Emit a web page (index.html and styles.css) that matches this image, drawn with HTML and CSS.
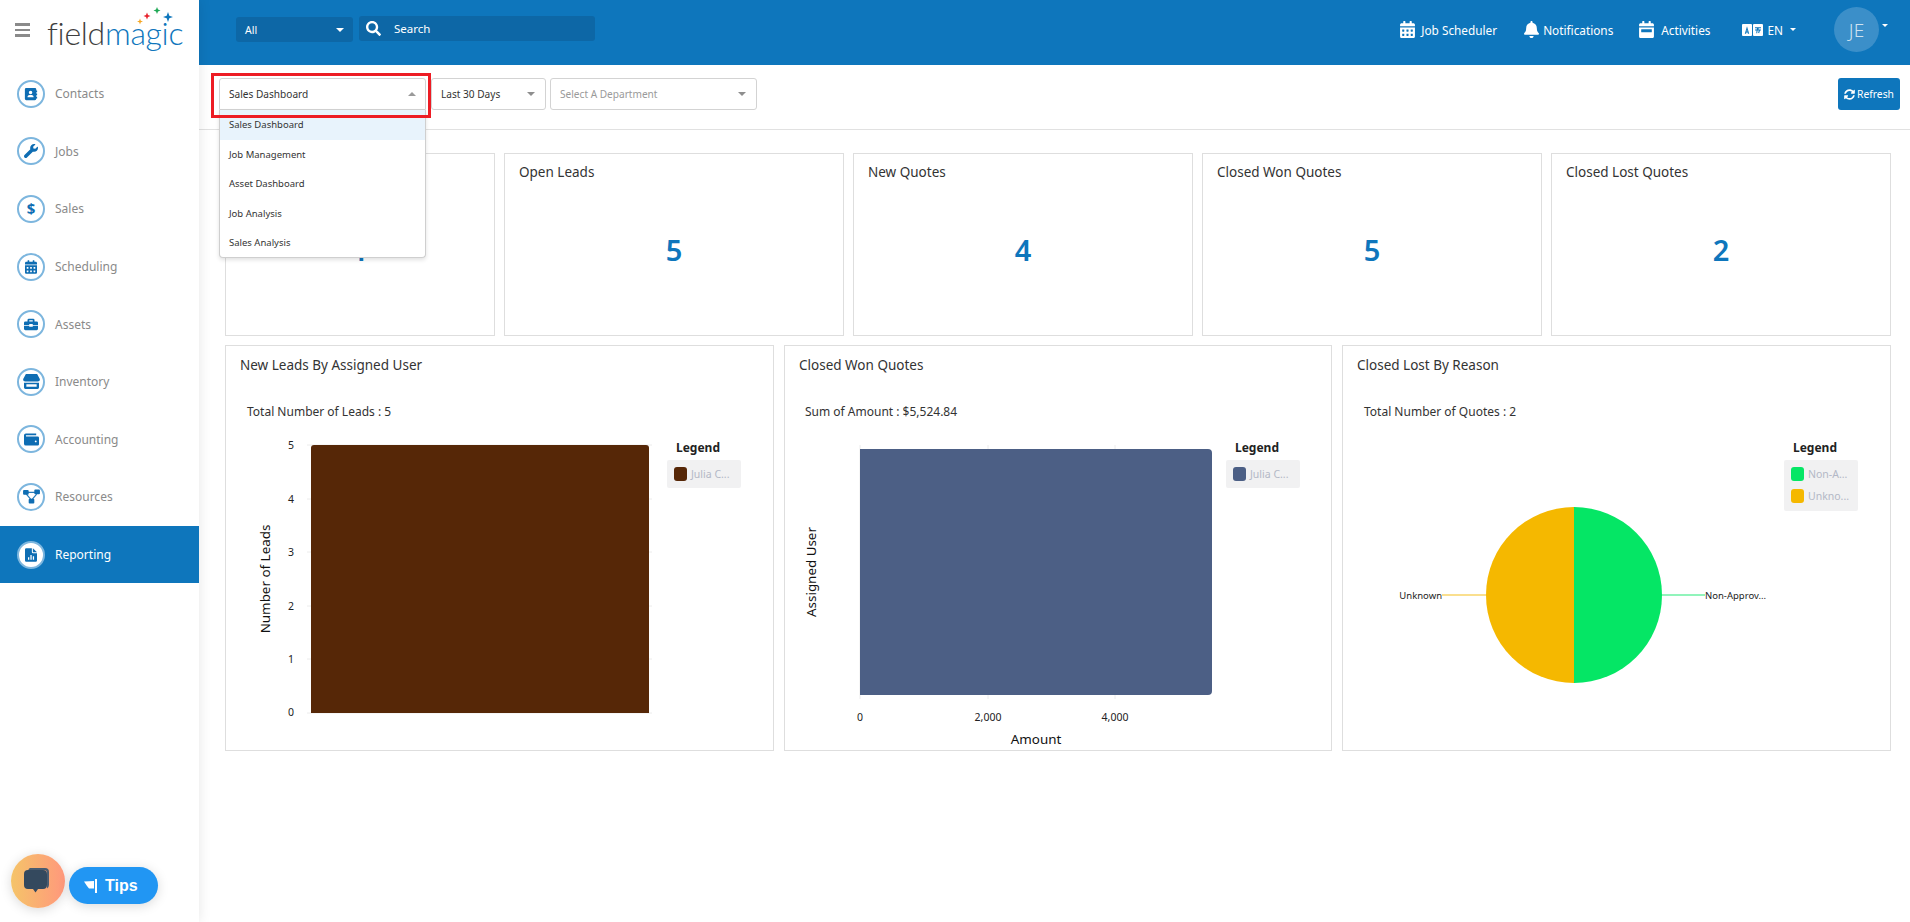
FILE: index.html
```html
<!DOCTYPE html>
<html lang="en">
<head>
<meta charset="utf-8">
<title>fieldmagic - Sales Dashboard</title>
<link rel="stylesheet" href="styles.css">
</head>
<body>
<svg class="defs" width="0" height="0" aria-hidden="true">
  <symbol id="i-cal" viewBox="0 0 448 512"><path d="M0 464c0 26.500 21.500 48 48 48h352c26.500 0 48-21.500 48-48V192H0v272zm320-196c0-6.600 5.400-12 12-12h40c6.600 0 12 5.400 12 12v40c0 6.600-5.400 12-12 12h-40c-6.600 0-12-5.400-12-12v-40zm0 128c0-6.600 5.400-12 12-12h40c6.600 0 12 5.400 12 12v40c0 6.600-5.400 12-12 12h-40c-6.600 0-12-5.400-12-12v-40zM192 268c0-6.600 5.400-12 12-12h40c6.600 0 12 5.400 12 12v40c0 6.600-5.400 12-12 12h-40c-6.600 0-12-5.400-12-12v-40zm0 128c0-6.600 5.400-12 12-12h40c6.600 0 12 5.400 12 12v40c0 6.600-5.400 12-12 12h-40c-6.600 0-12-5.400-12-12v-40zM64 268c0-6.600 5.400-12 12-12h40c6.600 0 12 5.400 12 12v40c0 6.600-5.400 12-12 12H76c-6.600 0-12-5.400-12-12v-40zm0 128c0-6.600 5.400-12 12-12h40c6.600 0 12 5.400 12 12v40c0 6.600-5.400 12-12 12H76c-6.600 0-12-5.400-12-12v-40zM400 64h-48V16c0-8.800-7.200-16-16-16h-32c-8.800 0-16 7.200-16 16v48H160V16c0-8.800-7.200-16-16-16h-32c-8.800 0-16 7.200-16 16v48H48C21.500 64 0 85.500 0 112v48h448v-48c0-26.500-21.500-48-48-48z"/></symbol>
  <symbol id="i-bell" viewBox="0 0 448 512"><path d="M224 512c35.320 0 63.970-28.650 63.970-64H160.030c0 35.350 28.650 64 63.970 64zm215.390-149.710c-19.320-20.760-55.470-51.990-55.470-154.290 0-77.700-54.480-139.900-127.940-155.160V32c0-17.670-14.320-32-31.980-32s-31.980 14.330-31.980 32v20.840C118.560 68.100 64.080 130.300 64.080 208c0 102.300-36.150 133.530-55.470 154.290-6 6.450-8.660 14.160-8.610 21.710.11 16.400 12.980 32 32.100 32h383.800c19.120 0 32-15.600 32.100-32 .05-7.550-2.610-15.270-8.610-21.710z"/></symbol>
  <symbol id="i-act" viewBox="0 0 448 512"><path d="M400 64h-48V16c0-8.800-7.200-16-16-16h-32c-8.800 0-16 7.200-16 16v48H160V16c0-8.800-7.200-16-16-16h-32c-8.800 0-16 7.200-16 16v48H48C21.500 64 0 85.500 0 112v48h448v-48c0-26.500-21.500-48-48-48zM0 464c0 26.500 21.500 48 48 48h352c26.500 0 48-21.500 48-48V192H0v272zm64-200c0-6.600 5.400-12 12-12h296c6.600 0 12 5.400 12 12v64c0 6.600-5.400 12-12 12H76c-6.600 0-12-5.400-12-12v-64z"/></symbol>
  <symbol id="i-search" viewBox="0 0 512 512"><path d="M505 442.700L405.300 343c-4.500-4.500-10.600-7-17-7H372c27.600-35.300 44-79.700 44-128C416 93.100 322.900 0 208 0S0 93.100 0 208s93.100 208 208 208c48.300 0 92.700-16.400 128-44v16.300c0 6.400 2.500 12.500 7 17l99.700 99.700c9.400 9.400 24.600 9.400 33.900 0l28.300-28.300c9.400-9.400 9.400-24.600.1-34zM208 336c-70.700 0-128-57.200-128-128 0-70.700 57.200-128 128-128 70.700 0 128 57.200 128 128 0 70.700-57.200 128-128 128z"/></symbol>
  <symbol id="i-sync" viewBox="0 0 512 512"><path d="M370.720 133.280C339.458 104.008 298.888 87.962 255.848 88c-77.458.068-144.328 53.178-162.791 126.850-1.344 5.363-6.122 9.150-11.651 9.150H24.103c-7.498 0-13.194-6.807-11.807-14.176C33.933 94.924 134.813 8 256 8c66.448 0 126.791 26.136 171.315 68.685L463.030 40.970C478.149 25.851 504 36.559 504 57.941V192c0 13.255-10.745 24-24 24H345.941c-21.382 0-32.090-25.851-16.971-40.971l41.750-41.749zM32 296h134.059c21.382 0 32.090 25.851 16.971 40.971l-41.750 41.750c31.262 29.273 71.835 45.319 114.876 45.280 77.418-.07 144.315-53.144 162.787-126.849 1.344-5.363 6.122-9.150 11.651-9.150h57.304c7.498 0 13.194 6.807 11.807 14.176C478.067 417.076 377.187 504 256 504c-66.448 0-126.791-26.136-171.315-68.685L48.970 471.030C33.851 486.149 8 475.441 8 454.059V320c0-13.255 10.745-24 24-24z"/></symbol>
  <symbol id="i-contacts" viewBox="0 0 16 16"><path fill-rule="evenodd" d="M2.500 1h10A1.500 1.500 0 0 1 14 2.500V4h1v2h-1v1.500h1v2h-1V11h1v2h-1v.5a1.500 1.500 0 0 1-1.500 1.500h-10A1.500 1.500 0 0 1 1 13.500v-11A1.500 1.500 0 0 1 2.500 1zM7.500 4.300a2 2 0 1 0 0 4 2 2 0 0 0 0-4zM4 11.800h7c0-1.700-1.100-2.700-2.300-2.700H6.300C5.100 9.100 4 10.100 4 11.800z"/></symbol>
  <symbol id="i-wrench" viewBox="0 0 512 512"><path d="M507.730 109.100c-2.240-9.030-13.540-12.090-20.120-5.510l-74.360 74.360-67.880-11.310-11.310-67.880 74.360-74.360c6.620-6.620 3.430-17.900-5.660-20.160-47.380-11.740-99.550.91-136.580 37.930-39.640 39.640-50.550 97.100-34.050 147.200L18.740 402.760c-24.990 24.990-24.990 65.510 0 90.500 24.990 24.990 65.510 24.990 90.500 0l213.210-213.210c50.120 16.710 107.470 5.680 147.370-34.220 37.070-37.070 49.700-89.320 37.910-136.730z"/></symbol>
  <symbol id="i-case" viewBox="0 0 16 16"><path d="M5.500 2h5A1.500 1.500 0 0 1 12 3.500V5h2.500A1.500 1.500 0 0 1 16 6.500V9H10V8H6v1H0V6.500A1.500 1.500 0 0 1 1.500 5H4V3.500A1.500 1.500 0 0 1 5.500 2zM6 3.700V5h4V3.700H6zM0 10h6v1h4v-1h6v3.500a1.500 1.500 0 0 1-1.500 1.500h-13A1.500 1.500 0 0 1 0 13.500V10z"/></symbol>
  <symbol id="i-store" viewBox="0 0 18 16"><path d="M3 0h12l3 5.500A2.500 2.500 0 0 1 15.700 8H2.300A2.500 2.500 0 0 1 0 5.500L3 0zM1 9.200h16V14.500a1.500 1.500 0 0 1-1.500 1.500h-13A1.500 1.500 0 0 1 1 14.500V9.200zM3.500 11v2.500h11V11h-11z" fill-rule="evenodd"/></symbol>
  <symbol id="i-wallet" viewBox="0 0 16 16"><path fill-rule="evenodd" d="M2 1.500h11V3.500H2.300a.8.800 0 0 0 0 1.200H14.500A1.500 1.500 0 0 1 16 6.200V13a1.500 1.500 0 0 1-1.500 1.500H2A2 2 0 0 1 0 12.500V3.500a2 2 0 0 1 2-2zM12.500 9a1 1 0 1 0 0 2 1 1 0 0 0 0-2z"/></symbol>
  <symbol id="i-nodes" viewBox="0 0 18 16"><rect x="0" y="1" width="6" height="5" rx="1"/><rect x="12" y="0.500" width="6" height="5" rx="1"/><rect x="6" y="10.500" width="6" height="5" rx="1"/><path d="M5 3h8v1.200H5zM4 5l5 6-1 .8-5-6zM14 5l-5 6 1 .8 5-6z" opacity=".9"/></symbol>
  <symbol id="i-file" viewBox="0 0 14 16"><path fill-rule="evenodd" d="M1.500 0H8v4.500A1.500 1.500 0 0 0 9.500 6H14v8.500a1.500 1.500 0 0 1-1.500 1.500h-11A1.500 1.500 0 0 1 0 14.500v-13A1.500 1.500 0 0 1 1.500 0zM3.500 10.500v3h1.500v-3zM6.300 8v5.500h1.500V8zM9.100 9.500v4h1.500v-4z"/><path d="M9.200 0 14 4.800H9.200z"/></symbol>
</svg>

<div class="app">
  <aside class="sidebar">
    <div class="brand">
      <div class="burger"><span></span><span></span><span></span></div>
      <div class="logo">
        <span class="logo-dark">field</span><span class="logo-blue">magic</span>
        <svg class="logo-stars" viewBox="0 0 40 20" width="40" height="20" aria-hidden="true">
          <path fill="#f5a623" d="M3 11.500l.8 2.200 2.200.8-2.200.8L3 17.500l-.8-2.200-2.200-.8 2.200-.8z"/>
          <path fill="#e8232e" d="M10 5.500l1 2.500 2.500 1-2.500 1-1 2.500-1-2.500-2.500-1 2.500-1z"/>
          <path fill="#1fa855" d="M20 0l1 2.500 2.500 1-2.500 1-1 2.500-1-2.500-2.500-1 2.500-1z"/>
          <path fill="#0e76bc" d="M31 5l1.300 3.700L36 10l-3.700 1.300L31 15l-1.300-3.700L26 10l3.700-1.300z"/>
        </svg>
      </div>
    </div>
    <nav class="nav">
      <a class="nav-item"><span class="nav-ico"><svg width="14" height="14"><use href="#i-contacts"/></svg></span>Contacts</a>
      <a class="nav-item"><span class="nav-ico"><svg width="14" height="14"><use href="#i-wrench"/></svg></span>Jobs</a>
      <a class="nav-item"><span class="nav-ico nav-dollar">$</span>Sales</a>
      <a class="nav-item"><span class="nav-ico"><svg width="12" height="14"><use href="#i-cal"/></svg></span>Scheduling</a>
      <a class="nav-item"><span class="nav-ico"><svg width="14" height="14"><use href="#i-case"/></svg></span>Assets</a>
      <a class="nav-item"><span class="nav-ico"><svg width="17" height="15"><use href="#i-store"/></svg></span>Inventory</a>
      <a class="nav-item"><span class="nav-ico"><svg width="15" height="15"><use href="#i-wallet"/></svg></span>Accounting</a>
      <a class="nav-item"><span class="nav-ico"><svg width="17" height="15"><use href="#i-nodes"/></svg></span>Resources</a>
      <a class="nav-item is-active"><span class="nav-ico"><svg width="12" height="14"><use href="#i-file"/></svg></span>Reporting</a>
    </nav>
    <div class="helpers">
      <div class="chat-btn">
        <svg width="30" height="30" viewBox="0 0 30 30" aria-hidden="true">
          <path fill="#4a5c70" d="M7 2h15a4 4 0 0 1 4 4v13a4 4 0 0 1-2 3.400V7a3 3 0 0 0-3-3H5.300A4 4 0 0 1 7 2z"/>
          <path fill="#34495e" d="M5 4h15a4 4 0 0 1 4 4v11a4 4 0 0 1-4 4h-5l-2.500 3.500L10 23H5a4 4 0 0 1-4-4V8a4 4 0 0 1 4-4z"/>
        </svg>
      </div>
      <div class="tips-btn">
        <svg width="13" height="14" viewBox="0 0 13 14" aria-hidden="true"><path fill="#fff" d="M11 0h2v14h-2zM0 2.500l10-.5v7.500H5L3 7 0 2.500z"/></svg>
        <span>Tips</span>
      </div>
    </div>
  </aside>

  <div class="main">
    <header class="topbar">
      <div class="search-group">
        <div class="scope"><span>All</span><i class="caret caret-white"></i></div>
        <div class="search">
          <svg width="15" height="15"><use href="#i-search"/></svg>
          <span>Search</span>
        </div>
      </div>
      <div class="top-actions">
        <a class="top-link top-jobs"><svg width="15" height="17"><use href="#i-cal"/></svg>Job Scheduler</a>
        <a class="top-link top-bell"><svg width="15" height="17"><use href="#i-bell"/></svg>Notifications</a>
        <a class="top-link top-activities"><svg width="15" height="17"><use href="#i-act"/></svg>Activities</a>
        <a class="top-link top-lang">
          <svg width="21" height="12" viewBox="0 0 21 11" preserveAspectRatio="none" aria-hidden="true">
            <rect width="10" height="11" rx="1" fill="#fff"/><rect x="11" width="10" height="11" rx="1" fill="#fff"/>
            <path d="M5 2 2.800 9h1.300l.3-1.200h1.200L5.900 9h1.300L5 2zm-.4 4.800.4-1.700.4 1.700z" fill="#0e76bc"/>
            <path d="M13 3h6v1h-2.300l-.2 1H19v1h-1l-.9 2.500-1-.4.700-2.100h-1.200l-.4 2.500h-1l.4-2.500H13V5h1.700l.2-1H13z" fill="#0e76bc"/>
          </svg>
          EN<i class="caret caret-small"></i>
        </a>
        <div class="user"><div class="avatar">JE</div><i class="caret caret-small"></i></div>
      </div>
    </header>

    <section class="toolbar">
      <div class="filter-wrap">
        <div class="select select-open">
          <span>Sales Dashboard</span><i class="caret caret-up"></i>
        </div>
        <ul class="menu">
          <li class="menu-on">Sales Dashboard</li>
          <li>Job Management</li>
          <li>Asset Dashboard</li>
          <li>Job Analysis</li>
          <li>Sales Analysis</li>
        </ul>
        <div class="highlight"></div>
      </div>
      <div class="select select-range"><span>Last 30 Days</span><i class="caret caret-grey"></i></div>
      <div class="select select-dept"><span class="placeholder">Select A Department</span><i class="caret caret-grey"></i></div>
      <button class="refresh"><svg width="11" height="11"><use href="#i-sync"/></svg>Refresh</button>
    </section>

    <main class="content">
      <div class="stats">
        <article class="stat"><h3></h3><div class="stat-value">1</div></article>
        <article class="stat"><h3>Open Leads</h3><div class="stat-value">5</div></article>
        <article class="stat"><h3>New Quotes</h3><div class="stat-value">4</div></article>
        <article class="stat"><h3>Closed Won Quotes</h3><div class="stat-value">5</div></article>
        <article class="stat"><h3>Closed Lost Quotes</h3><div class="stat-value">2</div></article>
      </div>
      <div class="charts">
        <article class="chart">
          <h3>New Leads By Assigned User</h3>
          <p class="chart-sum">Total Number of Leads : 5</p>
          <svg class="plot" viewBox="0 0 547 320" width="547" height="320">
            <g class="grid">
              <path d="M81 15H426M81 69H426M81 122H426M81 176H426M81 229H426M81 283H426"/>
            </g>
            <path fill="#562707" d="M85 283V18a3 3 0 0 1 3-3H420a3 3 0 0 1 3 3V283z"/>
            <g class="tick" text-anchor="middle">
              <text x="65" y="19">5</text><text x="65" y="73">4</text><text x="65" y="126">3</text>
              <text x="65" y="180">2</text><text x="65" y="233">1</text><text x="65" y="286">0</text>
            </g>
            <text class="axis" text-anchor="middle" transform="translate(44 149) rotate(-90)">Number of Leads</text>
            <text class="leg-title" x="450" y="22">Legend</text>
            <rect class="leg-box" x="441" y="30" width="74" height="28" rx="2"/>
            <rect x="448" y="37" width="13" height="14" rx="3" fill="#562707"/>
            <text class="leg-text" x="465" y="48">Julia C...</text>
          </svg>
        </article>
        <article class="chart">
          <h3>Closed Won Quotes</h3>
          <p class="chart-sum chart-sum-tight">Sum of Amount : $5,524.84</p>
          <svg class="plot" viewBox="0 0 546 320" width="546" height="320">
            <g class="grid"><path d="M75 15V269M203 15V269M330 15V269"/></g>
            <path fill="#4c5f85" d="M75 19H423a4 4 0 0 1 4 4V261a4 4 0 0 1-4 4H75z"/>
            <g class="tick" text-anchor="middle">
              <text x="75" y="291">0</text><text x="203" y="291">2,000</text><text x="330" y="291">4,000</text>
            </g>
            <text class="axis" x="251" y="314" text-anchor="middle">Amount</text>
            <text class="axis" text-anchor="middle" transform="translate(31 142) rotate(-90)">Assigned User</text>
            <text class="leg-title" x="450" y="22">Legend</text>
            <rect class="leg-box" x="441" y="30" width="74" height="28" rx="2"/>
            <rect x="448" y="37" width="13" height="14" rx="3" fill="#4c5f85"/>
            <text class="leg-text" x="465" y="48">Julia C...</text>
          </svg>
        </article>
        <article class="chart">
          <h3>Closed Lost By Reason</h3>
          <p class="chart-sum">Total Number of Quotes : 2</p>
          <svg class="plot" viewBox="0 0 547 320" width="547" height="320">
            <path fill="#05e665" d="M231 77A88 88 0 0 1 231 253z"/>
            <path fill="#f5b800" d="M231 77A88 88 0 0 0 231 253z"/>
            <path stroke="#f9d468" stroke-width="1.500" d="M99 165H143"/>
            <path stroke="#6cf0a4" stroke-width="1.500" d="M319 165H362"/>
            <g class="pie-label">
              <text x="99" y="169" text-anchor="end">Unknown</text>
              <text x="362" y="169">Non-Approv...</text>
            </g>
            <text class="leg-title" x="450" y="22">Legend</text>
            <rect class="leg-box" x="441" y="30" width="74" height="51" rx="2"/>
            <rect x="448" y="37" width="13" height="14" rx="3" fill="#05e665"/>
            <text class="leg-text" x="465" y="48">Non-A...</text>
            <rect x="448" y="59" width="13" height="14" rx="3" fill="#f5b800"/>
            <text class="leg-text" x="465" y="70">Unkno...</text>
          </svg>
        </article>
      </div>
    </main>
  </div>
</div>
</body>
</html>
```
FILE: styles.css
```css
* { box-sizing: border-box; }
html, body { height: 100%; }
body {
  margin: 0;
  background: #fff;
  color: #333;
  font-family: "Noto Sans", "Open Sans", sans-serif;
  font-size: 12px;
  overflow: hidden;
}
.defs { position: absolute; }
h3, p, ul { margin: 0; padding: 0; }
svg { fill: currentColor; }

.app { display: flex; height: 922px; }

/* Sidebar */
.sidebar {
  width: 199px;
  flex: none;
  display: flex;
  flex-direction: column;
  background: #fff;
  box-shadow: 0 0 12px rgba(0, 0, 0, .1);
  position: relative;
  z-index: 2;
}
.brand { height: 65px; display: flex; align-items: flex-start; padding: 23px 0 0 15px; flex: none; }
.burger { width: 15px; display: flex; flex-direction: column; gap: 3px; }
.burger span { height: 2.500px; background: #8a8a8a; }
.logo { position: relative; margin: -13px 0 0 17px; font-family: "Lato", sans-serif; font-weight: 300; font-size: 32px; line-height: 46px; letter-spacing: -.3px; }
.logo-dark { color: #3f3f3f; }
.logo-blue { color: #0e76bc; }
.logo-stars { position: absolute; left: 90px; top: -3px; }
.nav { display: flex; flex-direction: column; }
.nav-item {
  height: 57.600px;
  display: flex;
  align-items: center;
  gap: 10px;
  padding-left: 17px;
  color: #8a8a8a;
  font-size: 12px;
}
.nav-ico {
  width: 28px;
  height: 28px;
  flex: none;
  border-radius: 50%;
  border: 2px solid #7db6de;
  display: flex;
  align-items: center;
  justify-content: center;
  color: #0e6db3;
  background: #fff;
}
.nav-dollar { font-weight: 700; font-size: 15px; line-height: 1; }
.is-active { background: #0e76bc; color: #fff; }
.helpers { margin-top: auto; margin-bottom: 14px; display: flex; align-items: flex-start; padding-left: 11px; gap: 4px; }
.chat-btn {
  width: 54px;
  height: 54px;
  border-radius: 50%;
  background: linear-gradient(90deg, #f5c469, #ff987c);
  display: flex;
  align-items: center;
  justify-content: center;
  box-shadow: 0 2px 12px rgba(0, 0, 0, .15);
}
.tips-btn {
  width: 89px;
  height: 37px;
  margin-top: 13px;
  border-radius: 19px;
  background: #2196f3;
  color: #fff;
  display: flex;
  align-items: center;
  gap: 8px;
  padding-left: 15px;
  font-family: "Liberation Sans", sans-serif;
  font-size: 16px;
  font-weight: 700;
  box-shadow: 0 2px 12px rgba(0, 0, 0, .15);
}

/* Header */
.main { flex: 1; min-width: 0; display: flex; flex-direction: column; }
.topbar { height: 65px; flex: none; background: #0e76bc; display: flex; justify-content: space-between; color: #fff; }
.search-group { display: flex; gap: 6px; padding: 16px 0 0 37px; }
.scope {
  width: 117px;
  height: 25px;
  margin-top: 1px;
  background: #0d67a6;
  border-radius: 3px;
  display: flex;
  align-items: center;
  justify-content: space-between;
  padding: 0 9px;
  font-size: 10.500px;
}
.search {
  width: 236px;
  height: 25px;
  background: #0d67a6;
  border-radius: 3px;
  display: flex;
  align-items: center;
  gap: 13px;
  padding-left: 7px;
  font-size: 11.500px;
}
.caret { width: 0; height: 0; border-left: 4px solid transparent; border-right: 4px solid transparent; border-top: 4px solid #8e8e8e; display: block; flex: none; }
.caret-white { border-top-color: #fff; }
.caret-small { border-left-width: 3px; border-right-width: 3px; border-top: 3px solid #fff; }
.caret-up { border-top: 0; border-bottom: 4px solid #9a9a9a; }
.top-actions { display: flex; align-items: center; padding: 0 22px 6px 0; }
.top-link { display: flex; align-items: center; gap: 6px; font-size: 11.800px; }
.top-jobs { margin-right: 27px; }
.top-bell { gap: 4px; margin-right: 26px; }
.top-activities { gap: 7px; margin-right: 32px; }
.top-lang { margin-right: 38px; gap: 4px; }
.top-lang .caret { margin-left: 3px; }
.user { display: flex; align-items: center; gap: 3px; }
.avatar {
  width: 45px;
  height: 45px;
  border-radius: 50%;
  background: #3b8fc9;
  display: flex;
  align-items: center;
  justify-content: center;
  font-size: 19px;
  font-weight: 300;
  color: #cfe2f0;
}
.user .caret { margin-bottom: 8px; }

/* Toolbar */
.toolbar {
  height: 65px;
  flex: none;
  display: flex;
  gap: 5px;
  padding: 13px 10px 0 20px;
  border-bottom: 1px solid #e1e1e1;
}
.filter-wrap { position: relative; height: 32px; }
.select {
  height: 32px;
  border: 1px solid #d3d3d3;
  border-radius: 3px;
  background: #fff;
  display: flex;
  align-items: center;
  justify-content: space-between;
  padding: 0 9px;
  font-size: 10.100px;
  color: #333;
}
.select-open { width: 207px; border-radius: 3px 3px 0 0; }
.select-range { width: 115px; padding-right: 10px; }
.select-dept { width: 207px; margin-left: -1px; padding-right: 10px; }
.placeholder { color: #9a9a9a; }
.menu {
  position: absolute;
  top: 32px;
  left: 0;
  width: 207px;
  height: 148px;
  list-style: none;
  background: #fff;
  border: 1px solid #cfcfcf;
  border-top: 0;
  border-radius: 0 0 4px 4px;
  box-shadow: 0 2px 4px rgba(0, 0, 0, .12);
  z-index: 3;
  font-size: 9.500px;
}
.menu li { height: 29.500px; display: flex; align-items: center; padding-left: 9px; color: #333; }
.menu-on { background: #e8f3fc; }
.highlight {
  position: absolute;
  left: -8px;
  top: -5px;
  width: 220px;
  height: 45px;
  border: 3px solid #ed1c24;
  z-index: 4;
  pointer-events: none;
}
.refresh {
  margin-left: auto;
  width: 62px;
  height: 32px;
  padding: 0;
  border: 0;
  border-radius: 3px;
  background: #0e76bc;
  color: #fff;
  font-family: inherit;
  font-size: 10.300px;
  display: flex;
  align-items: center;
  justify-content: center;
  gap: 2px;
}

/* Content */
.content { padding: 23px 19px 0 26px; display: flex; flex-direction: column; gap: 9px; }
.stats { display: grid; grid-template-columns: 270px repeat(4, 1fr); gap: 9px; }
.stat { height: 183px; border: 1px solid #dedede; background: #fff; padding: 8px 14px; position: relative; }
.stat h3, .chart h3 { font-weight: 400; font-size: 13.500px; line-height: 20px; color: #333; }
.stat h3 { height: 20px; }
.stat-value { margin-top: 48px; text-align: center; font-size: 29px; line-height: 40px; font-weight: 600; color: #0e76bc; }
.charts { display: grid; grid-template-columns: 549px 548px 549px; gap: 10px; }
.chart { height: 406px; border: 1px solid #dedede; background: #fff; }
.chart h3 { padding: 9px 0 0 14px; height: 47px; }
.chart-sum { font-size: 12px; line-height: 18px; height: 37px; padding: 10px 0 0 21px; color: #333; }
.chart-sum-tight { padding-left: 20px; }
.plot { display: block; }
.plot text { font-family: "Noto Sans", sans-serif; }
.grid path { stroke: #ececec; fill: none; stroke-width: 1; }
.tick text { font-size: 10.500px; fill: #222; }
.axis { font-size: 13.400px; fill: #111; }
.leg-title { font-size: 12px; font-weight: 700; fill: #222; }
.leg-box { fill: #f1f1f2; }
.leg-text { font-size: 10.500px; fill: #b3b8c6; }
.pie-label text { font-size: 9.500px; fill: #222; }
```
